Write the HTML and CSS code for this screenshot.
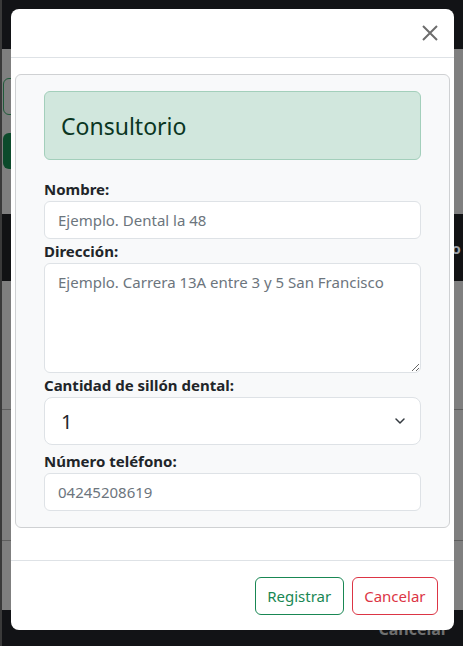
FILE: index.html
```html
<!DOCTYPE html>
<html lang="es">
<head>
<meta charset="utf-8">
<title>Consultorio</title>
<link rel="stylesheet" href="styles.css">
</head>
<body>
<div class="page">
  <div class="band-top"></div>
  <div class="band-gray">
    <div class="bg-btn-outline"></div>
    <div class="bg-btn-fill"></div>
  </div>
  <div class="band-dark"><span class="bg-o">o</span></div>
  <div class="band-rows">
    <div class="bg-row r1"></div>
    <div class="bg-row r2"></div>
    <div class="bg-row r3"></div>
  </div>
  <div class="band-bottom"><span class="bg-text">Cancelar</span></div>
</div>

<div class="modal">
  <div class="modal-header">
    <button class="btn-close" type="button" aria-label="Cerrar">
      <svg width="16" height="16" viewBox="0 0 16 16"><path d="M1 1 15 15M15 1 1 15" stroke="#6d6d6d" stroke-width="2" fill="none"/></svg>
    </button>
  </div>
  <div class="modal-body">
    <div class="card">
      <div class="alert">Consultorio</div>
      <form class="form">
        <label class="label" for="nombre">Nombre:</label>
        <input class="input" id="nombre" type="text" placeholder="Ejemplo. Dental la 48">
        <label class="label" for="dir">Dirección:</label>
        <textarea class="input textarea" id="dir" placeholder="Ejemplo. Carrera 13A entre 3 y 5 San Francisco"></textarea>
        <label class="label" for="sillon">Cantidad de sillón dental:</label>
        <select class="select" id="sillon"><option>1</option></select>
        <label class="label label-gap" for="tel">Número teléfono:</label>
        <input class="input" id="tel" type="text" placeholder="04245208619">
      </form>
    </div>
  </div>
  <div class="modal-footer">
    <button class="btn btn-success" type="button">Registrar</button>
    <button class="btn btn-danger" type="button">Cancelar</button>
  </div>
</div>
</body>
</html>
```
FILE: styles.css
```css
* { box-sizing: border-box; }
html, body { margin: 0; padding: 0; }
body {
  width: 463px;
  height: 646px;
  overflow: hidden;
  font-family: "Noto Sans", "Open Sans", sans-serif;
  color: #212529;
  background: #121316;
  position: relative;
}
.page {
  border-left: 2px solid #3a3a3a;
  height: 646px;
  display: flex;
  flex-direction: column;
}
.band-top { height: 49px; background: #121316; }
.band-gray {
  height: 165px;
  background: #7f7f7f;
  padding: 29px 0 0 1px;
  display: flex;
  flex-direction: column;
  gap: 18px;
}
.bg-btn-outline {
  width: 40px; height: 37px;
  border: 1px solid #1f5a3a;
  border-radius: 6px;
}
.bg-btn-fill {
  width: 40px; height: 36px;
  background: #0c4a2b;
  border-radius: 6px;
}
.band-dark {
  height: 67px;
  background: #111214;
  display: flex;
  justify-content: flex-end;
  align-items: center;
  padding-right: 2px;
}
.bg-o { color: #9aa0a6; font-weight: bold; font-size: 15px; }
.band-rows {
  height: 329px;
  background: #7f7f7f;
  display: flex;
  flex-direction: column;
}
.bg-row { border-bottom: 1px solid #5e5e5e; }
.r1 { height: 129px; }
.r2 { height: 131px; }
.r3 { height: 69px; border-bottom: 0; }
.band-bottom {
  flex: 1;
  background: #121316;
  display: flex;
  justify-content: flex-end;
  padding: 9px 15px 0 0;
}
.bg-text { color: #6f6f6f; font-size: 16px; line-height: 20px; font-weight: 700; }

.modal {
  position: absolute;
  top: 9px;
  left: 11px;
  width: 443px;
  height: 621px;
  background: #fff;
  border-radius: 8px;
  display: flex;
  flex-direction: column;
}
.modal-header {
  height: 49px;
  border-bottom: 1px solid #dee2e6;
  display: flex;
  justify-content: flex-end;
  align-items: center;
  padding: 0 12px 0 0;
}
.btn-close {
  border: 0;
  background: transparent;
  padding: 4px;
  width: 24px;
  height: 24px;
  display: flex;
}
.modal-body { padding: 16px 4px 32px; }
.card {
  background: #f8f9fa;
  border: 1px solid #cfd1d3;
  border-radius: 6px;
  padding: 16px 28px 16px;
}
.alert {
  background: #d1e7dd;
  border: 1px solid #a3cfbb;
  border-radius: 6px;
  color: #0a3622;
  font-size: 23px;
  line-height: 34px;
  padding: 17px 17px 16px 16px;
  margin-bottom: 17px;
}
.form { display: flex; flex-direction: column; }
.label {
  font-weight: 700;
  font-size: 15px;
  line-height: 24px;
}
.label-gap { margin-top: 4px; }
.input {
  height: 38px;
  border: 1px solid #dee2e6;
  border-radius: 6px;
  background: #fff;
  padding: 6px 13px;
  font-family: inherit;
  font-size: 15px;
  color: #212529;
  outline: none;
}
.input::placeholder { color: #6c757d; opacity: 1; }
.textarea {
  height: 110px;
  resize: vertical;
  line-height: 24px;
}
.select {
  appearance: none;
  -webkit-appearance: none;
  height: 48px;
  border: 1px solid #dee2e6;
  border-radius: 8px;
  padding: 8px 40px 8px 16px;
  font-family: inherit;
  font-size: 20px;
  color: #212529;
  background: #fff url("data:image/svg+xml,%3csvg xmlns='http://www.w3.org/2000/svg' viewBox='0 0 16 16'%3e%3cpath fill='none' stroke='%23343a40' stroke-linecap='round' stroke-linejoin='round' stroke-width='1.5' d='m4 6 4 4 4-4'/%3e%3c/svg%3e") no-repeat right 12px center / 16px 16px;
}
.modal-footer {
  margin-top: auto;
  border-top: 1px solid #dee2e6;
  display: flex;
  justify-content: flex-end;
  align-items: center;
  gap: 8px;
  padding: 16px 16px 15px;
}
.btn {
  height: 38px;
  padding: 6px 11.5px;
  font-family: inherit;
  font-size: 15px;
  border-radius: 6px;
  background: transparent;
  border: 1px solid;
}
.btn-success { color: #198754; border-color: #198754; }
.btn-danger { color: #dc3545; border-color: #dc3545; }
```
